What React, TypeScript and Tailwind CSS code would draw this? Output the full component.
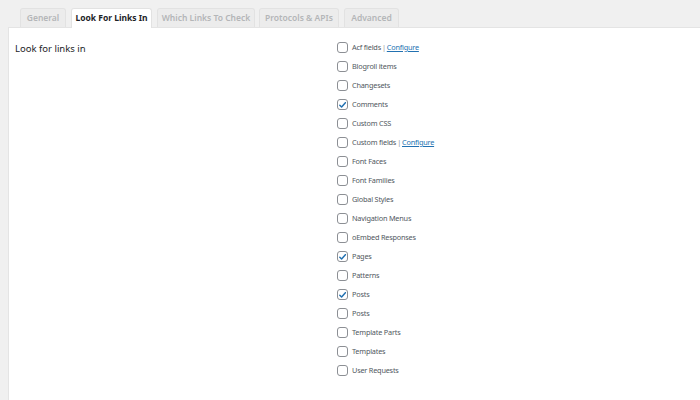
import React from "react";

const items: { label: string; checked?: boolean; configure?: boolean }[] = [
  { label: "Acf fields", configure: true },
  { label: "Blogroll items" },
  { label: "Changesets" },
  { label: "Comments", checked: true },
  { label: "Custom CSS" },
  { label: "Custom fields", configure: true },
  { label: "Font Faces" },
  { label: "Font Families" },
  { label: "Global Styles" },
  { label: "Navigation Menus" },
  { label: "oEmbed Responses" },
  { label: "Pages", checked: true },
  { label: "Patterns" },
  { label: "Posts", checked: true },
  { label: "Posts" },
  { label: "Template Parts" },
  { label: "Templates" },
  { label: "User Requests" },
];

function Box({ checked }: { checked?: boolean }) {
  return (
    <span className="w-[11px] h-[11px] rounded-[3px] border border-[#8c8f94] bg-white flex items-center justify-center shrink-0">
      {checked && (
        <svg width="10" height="10" viewBox="0 0 10 10">
          <path d="M2 5.2 L4 7.2 L8.2 2.4" fill="none" stroke="#2271b1" strokeWidth="1.6" strokeLinecap="round" strokeLinejoin="round" />
        </svg>
      )}
    </span>
  );
}

export default function App() {
  const font = { fontFamily: '"Noto Sans", "Open Sans", sans-serif' };
  return (
    <div className="w-[700px] h-[400px] bg-[#f0f0f0] overflow-hidden flex flex-col" style={font}>
      <div className="flex items-end pl-[20px] pt-[7px] h-[27px] shrink-0">
        <div className="w-[46px] h-[19px] mr-[5px] rounded-t-[3px] border border-b-0 border-[#e2e2e2] bg-[#ececec] text-[#b4b6b8] text-[8.5px] font-semibold flex items-center justify-center">General</div>
        <div className="w-[81px] h-[20px] mr-[5px] rounded-t-[3px] border border-b-0 border-[#e2e2e2] bg-white text-[#1d2327] text-[8.5px] font-bold flex items-center justify-center relative top-[1px]">Look For Links In</div>
        <div className="w-[98px] h-[19px] mr-[4px] rounded-t-[3px] border border-b-0 border-[#e2e2e2] bg-[#ececec] text-[#b4b6b8] text-[8.5px] font-semibold flex items-center justify-center">Which Links To Check</div>
        <div className="w-[80px] h-[19px] mr-[5px] rounded-t-[3px] border border-b-0 border-[#e2e2e2] bg-[#ececec] text-[#b4b6b8] text-[8.5px] font-semibold flex items-center justify-center">Protocols &amp; APIs</div>
        <div className="w-[55px] h-[19px] rounded-t-[3px] border border-b-0 border-[#e2e2e2] bg-[#ececec] text-[#b4b6b8] text-[8.5px] font-semibold flex items-center justify-center">Advanced</div>
      </div>
      <div className="flex-1 ml-[8px] bg-white border-l border-t border-[#e4e4e4] flex pt-[10px]">
        <div className="w-[328px] pl-[6px] pt-[4px] text-[9.5px] text-[#1d2327] shrink-0">Look for links in</div>
        <div className="flex flex-col">
          {items.map((it, i) => (
            <div key={i} className="h-[19px] flex items-center text-[7.3px] tracking-[-0.2px]">
              <Box checked={it.checked} />
              <span className="ml-[4px] text-[#50575e]">{it.label}</span>
              {it.configure && (
                <>
                  <span className="ml-[1px] mr-[1px] text-[#8c8f94]">|</span>
                  <span className="text-[#2271b1] underline">Configure</span>
                </>
              )}
            </div>
          ))}
        </div>
      </div>
    </div>
  );
}
